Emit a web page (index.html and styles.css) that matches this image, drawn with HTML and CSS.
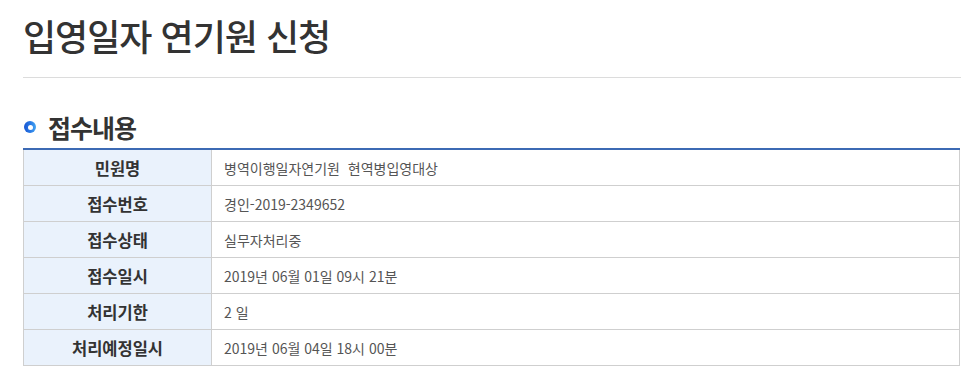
FILE: index.html
```html
<!DOCTYPE html>
<html lang="ko">
<head>
<meta charset="utf-8">
<link rel="stylesheet" href="styles.css">
</head>
<body>
<div class="page">
  <h1 class="page-title">입영일자 연기원 신청</h1>
  <h2 class="section-title"><span class="bullet"></span>접수내용</h2>
  <table class="info-table">
    <tbody>
      <tr><th>민원명</th><td>병역이행일자연기원&nbsp;&nbsp;현역병입영대상</td></tr>
      <tr><th>접수번호</th><td>경인-2019-2349652</td></tr>
      <tr><th>접수상태</th><td>실무자처리중</td></tr>
      <tr><th>접수일시</th><td>2019년 06월 01일 09시 21분</td></tr>
      <tr><th>처리기한</th><td>2 일</td></tr>
      <tr><th>처리예정일시</th><td>2019년 06월 04일 18시 00분</td></tr>
    </tbody>
  </table>
</div>
</body>
</html>
```
FILE: styles.css
```css
html, body {
  margin: 0;
  padding: 0;
  background: #fff;
}
body {
  font-family: "Noto Sans CJK KR", "Noto Sans", sans-serif;
  color: #333;
}
.page {
  width: 938px;
  margin-left: 23px;
}
.page-title {
  margin: 0;
  padding-top: 13px;
  box-sizing: border-box;
  height: 78px;
  font-size: 36px;
  line-height: 44px;
  font-weight: 500;
  color: #333;
  letter-spacing: -1px;
  border-bottom: 1px solid #dcdcdc;
}
.section-title {
  display: flex;
  align-items: center;
  gap: 12px;
  margin: 0;
  margin-top: 28px;
  height: 42px;
  font-size: 25px;
  font-weight: 700;
  color: #333;
  letter-spacing: -1px;
}
.bullet {
  position: relative;
  width: 12px;
  height: 12px;
  margin-left: 1px;
  border-radius: 50%;
  background: linear-gradient(90deg, #1856d2 0%, #2a7be6 55%, #45a6f2 100%);
}
.bullet::after {
  content: "";
  position: absolute;
  left: 3.5px;
  top: 3.5px;
  width: 5px;
  height: 5px;
  border-radius: 50%;
  background: #fff;
}
.info-table {
  width: 937px;
  border-collapse: collapse;
  border-top: 2px solid #3c6ab4;
  border-left: 1px solid #cfcfcf;
  border-right: 1px solid #cfcfcf;
}
.info-table th,
.info-table td {
  height: 35px;
  padding: 0;
  border-bottom: 1px solid #cfcfcf;
  font-size: 14px;
}
.info-table th {
  width: 187px;
  background: #eaf2fc;
  border-right: 1px solid #cfcfcf;
  font-size: 16.5px;
  font-weight: 700;
  color: #333;
  text-align: center;
}
.info-table td {
  padding-left: 12px;
  color: #555;
  text-align: left;
}
```
